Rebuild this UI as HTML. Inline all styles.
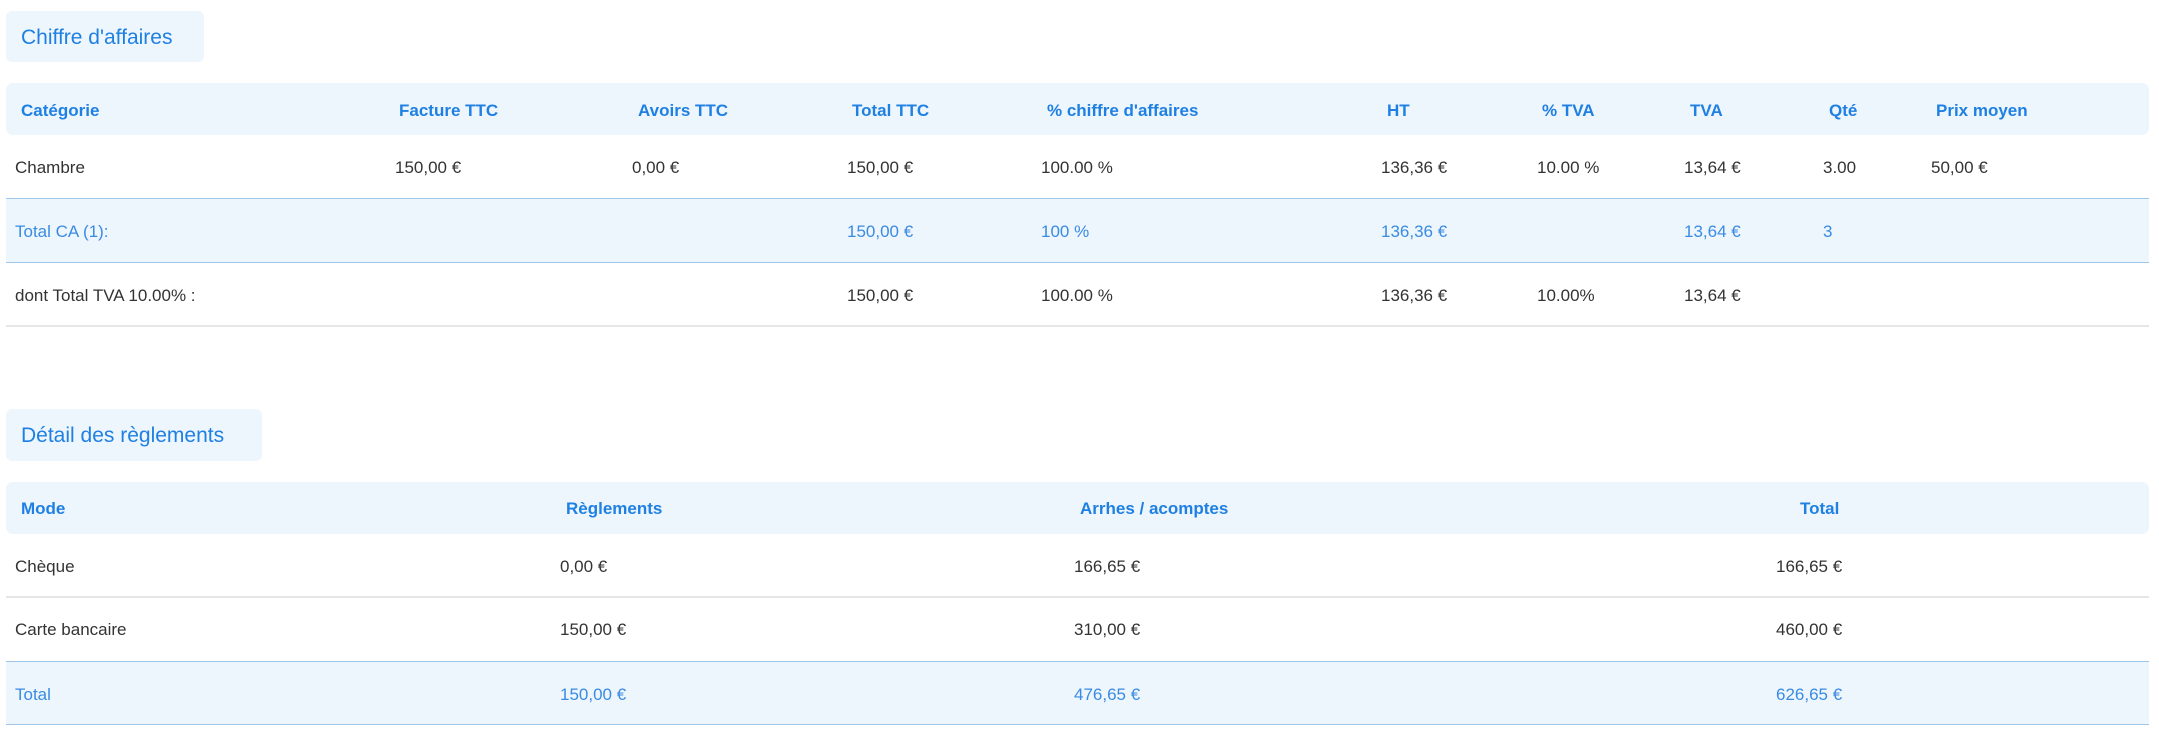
<!DOCTYPE html>
<html><head><meta charset="utf-8"><style>
body{margin:0;width:2159px;height:740px;background:#fff;font-family:"Liberation Sans",sans-serif;position:relative;overflow:hidden}
.a{position:absolute;white-space:nowrap;margin-top:2px}
.box{position:absolute;background:#edf5fd;border-radius:6px}
.t{color:#1f80e3;font-size:21px;line-height:53px;padding-left:15px}
.h{position:absolute;left:6px;width:2143px;background:#edf5fd;border-radius:7px}
.hd{color:#1f80e3;font-weight:bold;font-size:17px}
.d{color:#333;font-size:17px}
.b{color:#3a8be2;font-size:17px}
.tot{position:absolute;left:6px;width:2143px;background:#edf5fd;border-top:1.5px solid #9fc7ea;border-bottom:1.5px solid #9fc7ea}
.line{position:absolute;left:6px;width:2143px;height:1.5px;background:#e4e6e8}
</style></head><body>
<div class="box t" style="left:6px;top:11px;width:183px;height:51px">Chiffre d'affaires</div>
<div class="h" style="top:83px;height:52px"></div>
<div class="tot" style="top:198px;height:63px"></div>
<div class="line" style="top:325px"></div>

<div class="box t" style="left:6px;top:409px;width:241px;height:52px">Détail des règlements</div>
<div class="h" style="top:482px;height:52px"></div>
<div class="line" style="top:596px"></div>
<div class="tot" style="top:661px;height:62px"></div>

<div class="a hd" style="top:99px;left:21px">Catégorie</div>
<div class="a hd" style="top:99px;left:399px">Facture TTC</div>
<div class="a hd" style="top:99px;left:638px">Avoirs TTC</div>
<div class="a hd" style="top:99px;left:852px">Total TTC</div>
<div class="a hd" style="top:99px;left:1047px">% chiffre d'affaires</div>
<div class="a hd" style="top:99px;left:1387px">HT</div>
<div class="a hd" style="top:99px;left:1542px">% TVA</div>
<div class="a hd" style="top:99px;left:1690px">TVA</div>
<div class="a hd" style="top:99px;left:1829px">Qté</div>
<div class="a hd" style="top:99px;left:1936px">Prix moyen</div>

<div class="a d" style="top:156px;left:15px">Chambre</div>
<div class="a d" style="top:156px;left:395px">150,00 €</div>
<div class="a d" style="top:156px;left:632px">0,00 €</div>
<div class="a d" style="top:156px;left:847px">150,00 €</div>
<div class="a d" style="top:156px;left:1041px">100.00 %</div>
<div class="a d" style="top:156px;left:1381px">136,36 €</div>
<div class="a d" style="top:156px;left:1537px">10.00 %</div>
<div class="a d" style="top:156px;left:1684px">13,64 €</div>
<div class="a d" style="top:156px;left:1823px">3.00</div>
<div class="a d" style="top:156px;left:1931px">50,00 €</div>

<div class="a b" style="top:220px;left:15px">Total CA (1):</div>
<div class="a b" style="top:220px;left:847px">150,00 €</div>
<div class="a b" style="top:220px;left:1041px">100 %</div>
<div class="a b" style="top:220px;left:1381px">136,36 €</div>
<div class="a b" style="top:220px;left:1684px">13,64 €</div>
<div class="a b" style="top:220px;left:1823px">3</div>

<div class="a d" style="top:284px;left:15px">dont Total TVA 10.00% :</div>
<div class="a d" style="top:284px;left:847px">150,00 €</div>
<div class="a d" style="top:284px;left:1041px">100.00 %</div>
<div class="a d" style="top:284px;left:1381px">136,36 €</div>
<div class="a d" style="top:284px;left:1537px">10.00%</div>
<div class="a d" style="top:284px;left:1684px">13,64 €</div>

<div class="a hd" style="top:497px;left:21px">Mode</div>
<div class="a hd" style="top:497px;left:566px">Règlements</div>
<div class="a hd" style="top:497px;left:1080px">Arrhes / acomptes</div>
<div class="a hd" style="top:497px;left:1800px">Total</div>

<div class="a d" style="top:555px;left:15px">Chèque</div>
<div class="a d" style="top:555px;left:560px">0,00 €</div>
<div class="a d" style="top:555px;left:1074px">166,65 €</div>
<div class="a d" style="top:555px;left:1776px">166,65 €</div>

<div class="a d" style="top:618px;left:15px">Carte bancaire</div>
<div class="a d" style="top:618px;left:560px">150,00 €</div>
<div class="a d" style="top:618px;left:1074px">310,00 €</div>
<div class="a d" style="top:618px;left:1776px">460,00 €</div>

<div class="a b" style="top:683px;left:15px">Total</div>
<div class="a b" style="top:683px;left:560px">150,00 €</div>
<div class="a b" style="top:683px;left:1074px">476,65 €</div>
<div class="a b" style="top:683px;left:1776px">626,65 €</div>
</body></html>
